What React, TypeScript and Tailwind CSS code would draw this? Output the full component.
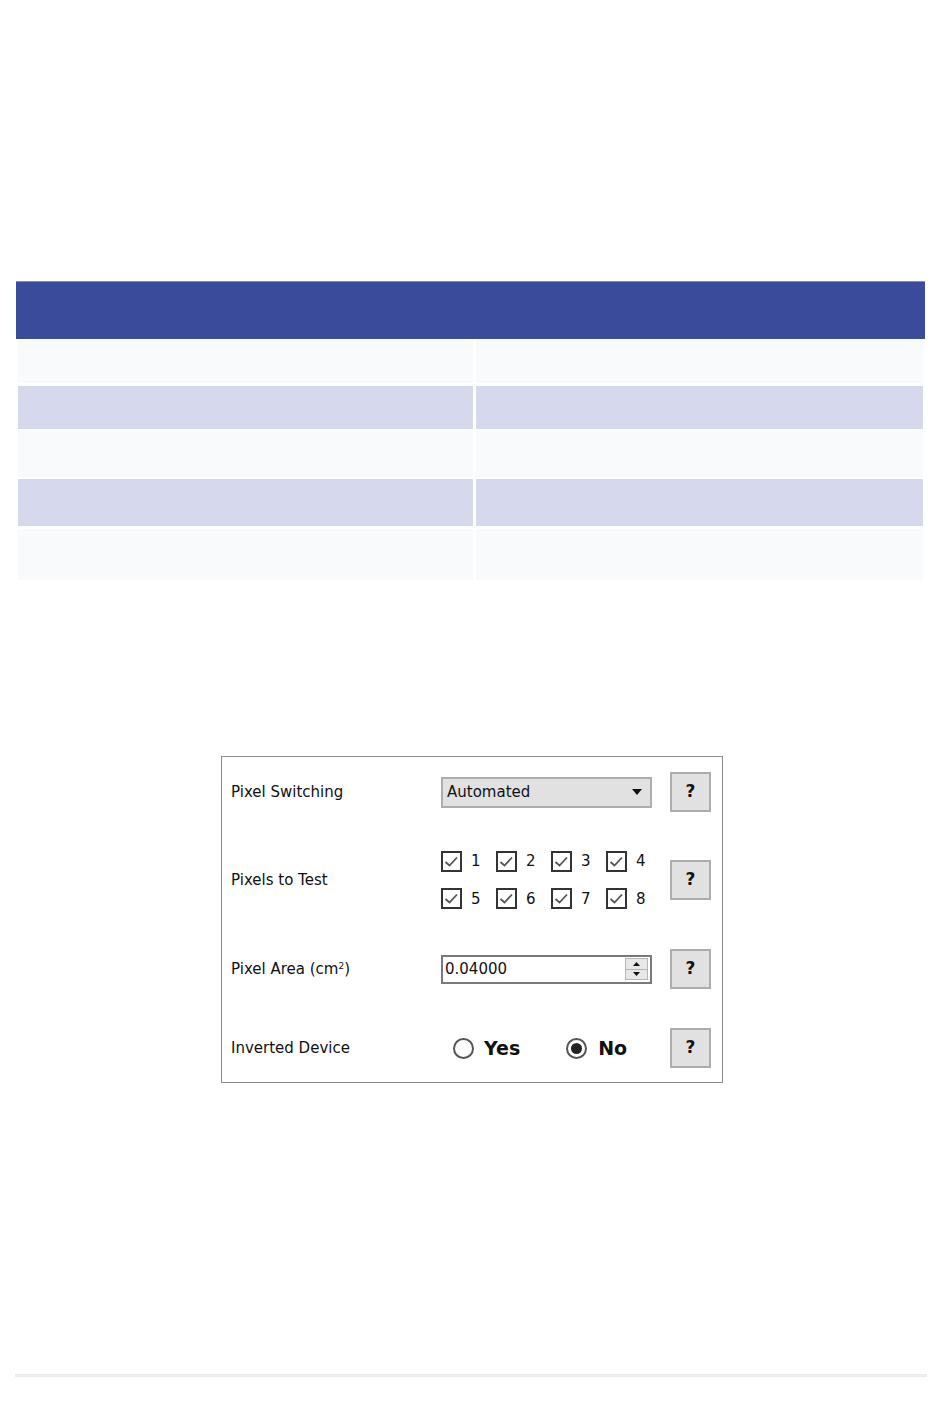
import React from "react";

const rows = [
  { h: "h-[43px]", mt: "mt-[1px]", bg: "bg-[#f9fafc]" },
  { h: "h-[43px]", mt: "mt-[3px]", bg: "bg-[#d6d8ed]" },
  { h: "h-[46px]", mt: "mt-[2px]", bg: "bg-[#f9fafc]" },
  { h: "h-[47px]", mt: "mt-[2px]", bg: "bg-[#d6d8ed]" },
  { h: "h-[51px]", mt: "mt-[3px]", bg: "bg-[#f9fafc]" },
];

function HelpButton() {
  return (
    <div className="w-[41px] h-[40px] bg-[#e1e1e1] border-2 border-[#adadad] flex items-center justify-center font-bold text-[17px] text-[#111]">
      ?
    </div>
  );
}

function CheckBox({ n }: { n: number }) {
  return (
    <div className="flex items-center w-[55px] shrink-0">
      <div className="w-[21px] h-[21px] shrink-0 border-2 border-[#333] bg-white flex items-center justify-center">
        <svg width="17" height="17" viewBox="0 0 17 17">
          <path d="M2.5 9 L6.5 12.5 L14 4.5" fill="none" stroke="#555" strokeWidth="1.8" />
        </svg>
      </div>
      <span className="ml-[9px] text-[15px] text-[#111]">{n}</span>
    </div>
  );
}

function Radio({ checked }: { checked: boolean }) {
  return (
    <div className="w-[21px] h-[21px] shrink-0 rounded-full border-2 border-[#555] bg-white flex items-center justify-center">
      {checked && <div className="w-[11px] h-[11px] rounded-full bg-[#222]" />}
    </div>
  );
}

export default function App() {
  return (
    <div
      className="w-[950px] min-h-[1402px] bg-white flex flex-col"
      style={{ fontFamily: '"DejaVu Sans", Verdana, sans-serif' }}
    >
      <div className="mt-[281px] ml-[16px] w-[909px]">
        <div className="h-[58px] bg-[#3a4b9b] border-t border-[#7d8ac4]" />
        {rows.map((r, i) => (
          <div key={i} className={`grid grid-cols-[455px_447px] gap-x-[3px] px-[2px] ${r.mt}`}>
            <div className={`${r.h} ${r.bg}`} />
            <div className={`${r.h} ${r.bg}`} />
          </div>
        ))}
      </div>

      <div className="mt-[176px] ml-[221px] w-[502px] border border-[#8c8c8c] bg-white pt-[15px] pb-[14px] text-[15px] text-[#111]">
        <div className="flex items-center h-[40px]">
          <div className="w-[219px] shrink-0 pl-[9px]">Pixel Switching</div>
          <div className="w-[211px] shrink-0 h-[31px] bg-[#e1e1e1] border-2 border-[#adadad] flex items-center justify-between pl-[4px] pr-[8px]">
            <span>Automated</span>
            <svg width="10" height="6" viewBox="0 0 10 6">
              <path d="M0 0 H10 L5 6 Z" fill="#111" />
            </svg>
          </div>
          <div className="ml-[18px]">
            <HelpButton />
          </div>
        </div>

        <div className="flex items-center h-[56px] mt-[40px]">
          <div className="w-[219px] shrink-0 pl-[9px]">Pixels to Test</div>
          <div className="w-[211px] shrink-0 flex flex-col gap-[15px]">
            <div className="flex">
              {[1, 2, 3, 4].map((n) => (
                <CheckBox key={n} n={n} />
              ))}
            </div>
            <div className="flex">
              {[5, 6, 7, 8].map((n) => (
                <CheckBox key={n} n={n} />
              ))}
            </div>
          </div>
          <div className="ml-[18px]">
            <HelpButton />
          </div>
        </div>

        <div className="flex items-center h-[40px] mt-[41px]">
          <div className="w-[219px] shrink-0 pl-[9px]">
            Pixel Area (cm<sup className="text-[9px]">2</sup>)
          </div>
          <div className="w-[211px] shrink-0 h-[29px] bg-white border-2 border-[#7a7a7a] flex items-center pl-[2px] pr-[2px]">
            <span className="flex-1">0.04000</span>
            <div className="w-[23px] h-[22px] flex flex-col bg-[#f0f0f0]">
              <div className="flex-1 border border-[#b5b5b5] bg-[#e8e8e8] flex items-center justify-center">
                <svg width="7" height="4" viewBox="0 0 7 4"><path d="M0 4 L3.5 0 L7 4 Z" fill="#111" /></svg>
              </div>
              <div className="flex-1 border border-[#b5b5b5] border-t-0 bg-[#e8e8e8] flex items-center justify-center">
                <svg width="7" height="4" viewBox="0 0 7 4"><path d="M0 0 L7 0 L3.5 4 Z" fill="#111" /></svg>
              </div>
            </div>
          </div>
          <div className="ml-[18px]">
            <HelpButton />
          </div>
        </div>

        <div className="flex items-center h-[40px] mt-[39px]">
          <div className="w-[219px] shrink-0 pl-[9px]">Inverted Device</div>
          <div className="w-[211px] shrink-0 flex items-center pl-[12px]">
            <Radio checked={false} />
            <span className="ml-[10px] font-bold text-[19px]">Yes</span>
            <div className="ml-[46px]">
              <Radio checked={true} />
            </div>
            <span className="ml-[11px] font-bold text-[19px]">No</span>
          </div>
          <div className="ml-[18px]">
            <HelpButton />
          </div>
        </div>
      </div>

      <div className="mt-[291px] ml-[15px] w-[912px] h-[3px] bg-[#ececec]" />
    </div>
  );
}
